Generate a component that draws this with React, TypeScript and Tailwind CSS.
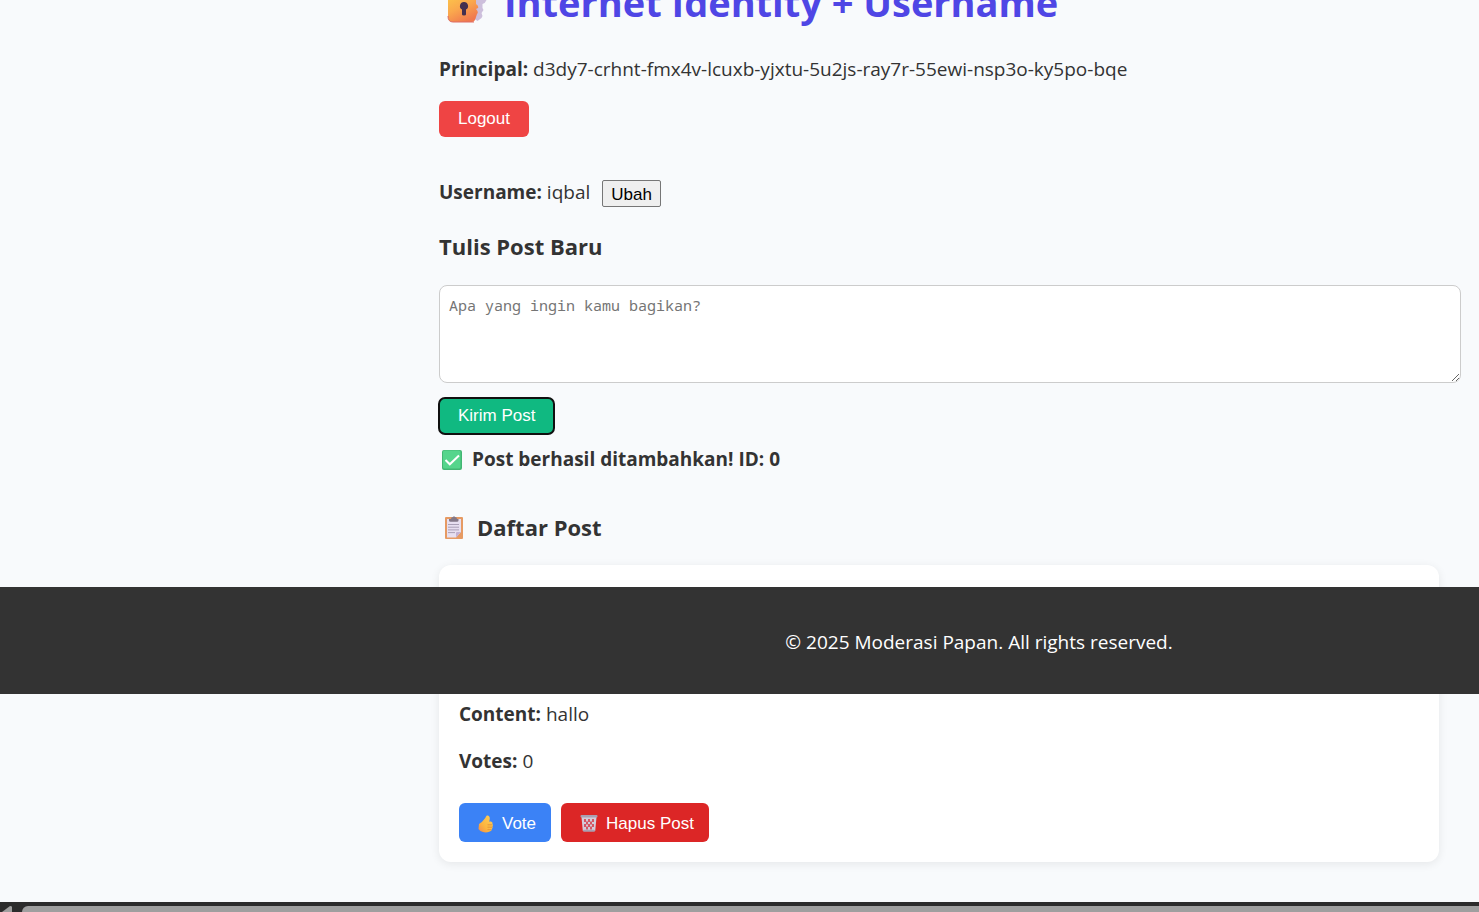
import React from "react";

function LockIcon() {
  return (
    <svg viewBox="0 0 40 44" className="mb-0.5 h-11 w-10 shrink-0" aria-hidden="true">
      <defs>
        <linearGradient id="lockBody" x1="0" y1="0" x2="0.6" y2="1">
          <stop offset="0" stopColor="#fcc64a" />
          <stop offset="0.5" stopColor="#faa84d" />
          <stop offset="1" stopColor="#f0784f" />
        </linearGradient>
      </defs>
      <path d="M7 20V12a10 10 0 0 1 20 0v8" fill="none" stroke="#a59bb0" strokeWidth="4" />
      <path d="M24 14h15.500v7q-1 3-4 4v4l1 2-2 3 1 3-1 2-4 3-3-2z" fill="#cdbfdc" />
      <path d="M4 17h22q3 0 3 3v5q3 2 2 4l-2 1q3 3 1 5l-1 3q-1 5-4 5H6q-5 0-5-5V20q0-3 3-3z" fill="url(#lockBody)" />
      <path d="M1 37q0 6 5 6h21" fill="none" stroke="#dd6d64" strokeWidth="1" />
      <path d="M17 23a4 4 0 0 1 2 7.500v5q0 1-2 1t-2-1v-5a4 4 0 0 1 2-7.500z" fill="#44304f" />
    </svg>
  );
}

function CheckIcon() {
  return (
    <svg viewBox="0 0 20 20" className="size-5 shrink-0" aria-hidden="true">
      <rect width="20" height="20" rx="2" fill="#42b673" />
      <rect x="1" y="0.500" width="17.500" height="18" rx="1.500" fill="#55d58c" />
      <path d="M3.500 10l4.300 4.300L17 5.500" fill="none" stroke="#fff" strokeWidth="2" />
    </svg>
  );
}

function ClipboardIcon() {
  return (
    <svg viewBox="0 0 18 23" className="h-[23px] w-[18px] shrink-0" aria-hidden="true">
      <rect y="1" width="18" height="22" rx="1" fill="#e69a63" />
      <path d="M2 3h14v13l-5 5.500H2z" fill="#e7dff0" />
      <path d="M11 21.500V17q0-1 1-1h4z" fill="#c4b1d2" />
      <path d="M4 3h2q0-2 2-2a1.200 1.200 0 0 1 2 0q2 0 2 2h1.500v1.500q0 1.200-1.500 1.200H5.500Q4 5.700 4 4.500z" fill="#837887" />
      <path d="M3 8.500h11M3 11.200h11M3 13.900h11M3 16.600h7" stroke="#aaa0b7" strokeWidth="1" />
    </svg>
  );
}

function ThumbIcon() {
  return (
    <svg viewBox="0 0 16 18" className="h-[18px] w-4 shrink-0" aria-hidden="true">
      <defs>
        <linearGradient id="thumb" x1="0" y1="1" x2="1" y2="0">
          <stop offset="0" stopColor="#f28a4c" />
          <stop offset="0.400" stopColor="#fbb63f" />
          <stop offset="1" stopColor="#ffd05b" />
        </linearGradient>
      </defs>
      <path d="M1 9q3-1.500 5-4.500Q7.500 3 8 1.500 8.500 0 10 .5q2.500 1 1.500 5l-.5 1h2q2 .5 1.500 2.500.8 1 0 2.500.5 1.500-.7 2.500 0 2-2 2.500Q8 18 5 17q-3-.5-4.500-3z" fill="url(#thumb)" />
      <path d="M9.500 9.800H14M9.500 12.200H14M9.500 14.700H13.200" stroke="#dd8a35" strokeWidth="0.800" />
    </svg>
  );
}

function TrashIcon() {
  return (
    <svg viewBox="0 0 18 17" className="h-[17px] w-[18px] shrink-0" aria-hidden="true">
      <path d="M1.500 2h15l-1.300 14H2.800z" fill="#d4ccda" />
      <path
        d="M5 4v3M9 4v3M13 4v3M7 6.500v3M11 6.500v3M5 9v3M9 9v3M13 9v3M7 11.500v3M11 11.500v3"
        fill="none"
        stroke="#d52f3c"
        strokeWidth="1.500"
      />
      <rect x="0.500" width="17" height="2.500" rx="1" fill="#a9a0b2" />
      <rect x="3" y="14.800" width="12" height="2" rx="1" fill="#a9a0b2" />
    </svg>
  );
}

function HorizontalScrollbar() {
  return (
    <div className="flex h-2.5 items-end overflow-hidden bg-[#2c2c2c]" aria-hidden="true">
      <svg viewBox="0 0 12 6" className="mr-2.5 h-1.5 w-3 shrink-0">
        <path d="M2 6L10 0q2 0 2 1v5z" fill="#9f9f9f" />
      </svg>
      <div className="h-1.5 grow rounded-tl-md bg-[#9f9f9f]" />
    </div>
  );
}

const actionButton =
  "rounded-md px-[19px] text-[17px] leading-5 text-white font-['Liberation_Sans',sans-serif]";

export default function App() {
  return (
    <div className="relative flex min-h-screen flex-col overflow-hidden bg-[#f8fafc] font-['Open_Sans','Noto_Sans',sans-serif] text-[19px] leading-[29px] text-[#333]">
      <main className="flex grow flex-col items-start pr-10 pb-10 pl-[439px]">
        <h1 className="-mt-5 flex h-11 items-center gap-[17px] pl-2 text-[38px] font-bold whitespace-nowrap text-[#4f46e5]">
          <LockIcon />
          Internet Identity + Username
        </h1>

        <p className="mt-[31px]">
          <strong>Principal:</strong> d3dy7-crhnt-fmx4v-lcuxb-yjxtu-5u2js-ray7r-55ewi-nsp3o-ky5po-bqe
        </p>
        <button type="button" className={`${actionButton} mt-[17px] h-9 bg-[#ef4444]`}>
          Logout
        </button>

        <div className="mt-[41px] flex items-end gap-3">
          <p>
            <strong>Username:</strong> iqbal
          </p>
          <button
            type="button"
            className="h-[27px] rounded-xs border border-[#767676] bg-[#efefef] px-2 pt-0.5 font-['Liberation_Sans',sans-serif] text-[17px] leading-5 text-black"
          >
            Ubah
          </button>
        </div>

        <h3 className="mt-[23px] text-[22px] leading-8 font-bold">
          <label htmlFor="post-body">Tulis Post Baru</label>
        </h3>
        <textarea
          id="post-body"
          placeholder="Apa yang ingin kamu bagikan?"
          className="mt-[23px] h-[98px] w-[calc(100%+22px)] resize rounded-lg border border-[#ccc] bg-white px-[9px] py-[7px] font-['Noto_Sans_Mono','DejaVu_Sans_Mono',monospace] text-[15px] leading-6 placeholder:text-[#757575]"
        />
        <button
          type="button"
          className={`${actionButton} mt-[15px] h-9 bg-[#10b981] outline-2 -outline-offset-1 outline-[#101010]`}
        >
          Kirim Post
        </button>
        <p className="mt-[11px] flex items-center gap-2.5 pl-[3px] font-bold">
          <CheckIcon />
          Post berhasil ditambahkan! ID: 0
        </p>

        <h3 className="mt-[37px] flex items-center gap-3.5 pl-1.5 text-[22px] leading-8 font-bold">
          <ClipboardIcon />
          Daftar Post
        </h3>
        <article className="mt-[22px] w-full rounded-xl bg-white px-5 pt-[135px] pb-5 shadow-[0_2px_10px_rgba(0,0,0,0.08)]">
          <p>
            <strong>Content:</strong> hallo
          </p>
          <p className="mt-[18px]">
            <strong>Votes:</strong> 0
          </p>
          <div className="mt-[27px] flex gap-2.5 font-['Liberation_Sans',sans-serif] text-[17px] leading-5 text-white">
            <button type="button" className="flex h-[39px] items-center gap-2 rounded-md bg-[#3b82f6] pt-0.5 pr-[15px] pl-[19px]">
              <ThumbIcon />
              Vote
            </button>
            <button type="button" className="flex h-[39px] items-center gap-2 rounded-md bg-[#dc2626] pt-0.5 pr-[15px] pl-[19px]">
              <TrashIcon />
              Hapus Post
            </button>
          </div>
        </article>
      </main>

      <footer className="absolute inset-x-0 top-[587px] bg-[#333] pt-[41px] pb-[37px] pl-[479px] text-center text-white">
        <p>© 2025 Moderasi Papan. All rights reserved.</p>
      </footer>
      <HorizontalScrollbar />
    </div>
  );
}
